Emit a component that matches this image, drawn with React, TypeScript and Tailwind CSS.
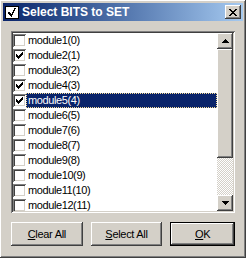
import { FC } from "react";

const items = Array.from({ length: 12 }, (_, i) => ({
  label: `module${i + 1}(${i})`,
  checked: i === 1 || i === 3 || i === 4
}));

const raised =
  "shadow-[inset_-1px_-1px_#404040,inset_1px_1px_#fff,inset_-2px_-2px_#808080,inset_2px_2px_#D4D0C8]";

const Check: FC = () => (
  <svg width="7" height="7" viewBox="0 0 7 7" className="block">
    <path d="M0 2h1v1h1v1h1V3h1V2h1V1h1V0h1v3H6v1H5v1H4v1H3v1H2V6H1V5H0z" fill="#000" />
  </svg>
);

const CheckBox: FC<{ checked: boolean }> = ({ checked }) => (
  <div className="w-[13px] h-[13px] bg-white shadow-[inset_1px_1px_#808080,inset_-1px_-1px_#fff,inset_2px_2px_#404040,inset_-2px_-2px_#D4D0C8] flex items-center justify-center shrink-0">
    {checked && <Check />}
  </div>
);

const Arrow: FC<{ up?: boolean }> = ({ up }) => (
  <svg width="7" height="4" viewBox="0 0 7 4" className="block">
    <path d={up ? "M3 0h1v1h1v1h1v1h1v1H0V3h1V2h1V1h1z" : "M0 0h7v1H6v1H5v1H4v1H3V3H2V2H1V1H0z"} fill="#000" />
  </svg>
);

const Button: FC<{ ul: string; rest: string; w: string; def?: boolean }> = ({ ul, rest, w, def }) => (
  <div className={`${w} h-[24px] ${def ? "border border-black" : ""}`}>
    <div className={`w-full h-full bg-[#D4D0C8] ${raised} flex items-center justify-center text-[11px] tracking-[-0.3px] text-black`}>
      <span>
        <span className="underline underline-offset-[1px]">{ul}</span>
        {rest}
      </span>
    </div>
  </div>
);

const App: FC = () => {
  return (
    <div
      className={`w-[246px] h-[258px] bg-[#D4D0C8] p-[3px] flex flex-col ${raised} select-none`}
      style={{ fontFamily: '"Liberation Sans", Arial, sans-serif' }}>
      <div className="h-[18px] flex items-center bg-gradient-to-r from-[#0A246A] to-[#A6CAF0] pl-[2px] pr-[2px]">
        <div className="w-[14px] h-[13px] bg-white border border-black flex items-center justify-center mr-[3px]">
          <svg width="9" height="9" viewBox="0 0 9 9" className="block">
            <path d="M0 4h2v1h1v1h1V4h1V2h1V0h2v1H7v2H6v2H5v2H4v2H3V8H2V7H1V6H0z" fill="#000" />
          </svg>
        </div>
        <span className="text-white font-bold text-[12px] leading-none flex-1">Select BITS to SET</span>
        <div className={`w-[16px] h-[14px] bg-[#D4D0C8] ${raised} flex items-center justify-center`}>
          <svg width="8" height="7" viewBox="0 0 8 7" className="block">
            <path d="M0 0h2v1h1v1h2V1h1V0h2v1H7v1H6v1H5v1h1v1h1v1h1v1H6V6H5V5H3v1H2v1H0V6h1V5h1V4h1V3H2V2H1V1H0z" fill="#000" />
          </svg>
        </div>
      </div>

      <div className="px-[8px] pt-[10px] flex flex-col">
        <div className="h-[182px] p-[2px] bg-white shadow-[inset_1px_1px_#808080,inset_-1px_-1px_#fff,inset_2px_2px_#404040,inset_-2px_-2px_#D4D0C8] flex">
          <div className="flex-1 flex flex-col overflow-hidden">
            {items.map((it, i) => {
              const sel = i === 4;
              return (
                <div key={i} className="h-[15px] flex items-center shrink-0">
                  <CheckBox checked={it.checked} />
                  <div
                    className={`flex-1 h-[15px] pl-[2px] flex items-center text-[11px] tracking-[-0.4px] ${
                      sel
                        ? "bg-[#0A246A] text-white outline outline-1 outline-dotted outline-[#F5DB95] -outline-offset-1"
                        : "text-black"
                    }`}>
                    {it.label}
                  </div>
                </div>
              );
            })}
          </div>
          <div className="w-[16px] flex flex-col">
            <div className={`h-[16px] bg-[#D4D0C8] ${raised} flex items-center justify-center`}>
              <Arrow up />
            </div>
            <div className={`h-[109px] bg-[#D4D0C8] ${raised}`} />
            <div className="flex-1 bg-[repeating-conic-gradient(#fff_0_25%,#D4D0C8_0_50%)] bg-[length:2px_2px]" />
            <div className={`h-[16px] bg-[#D4D0C8] ${raised} flex items-center justify-center`}>
              <Arrow />
            </div>
          </div>
        </div>

        <div className="flex mt-[9px] gap-[8px]">
          <Button ul="C" rest="lear All" w="w-[72px]" />
          <Button ul="S" rest="elect All" w="w-[72px]" />
          <Button ul="O" rest="K" w="w-[65px]" def />
        </div>
      </div>
    </div>
  );
};

export default App;
